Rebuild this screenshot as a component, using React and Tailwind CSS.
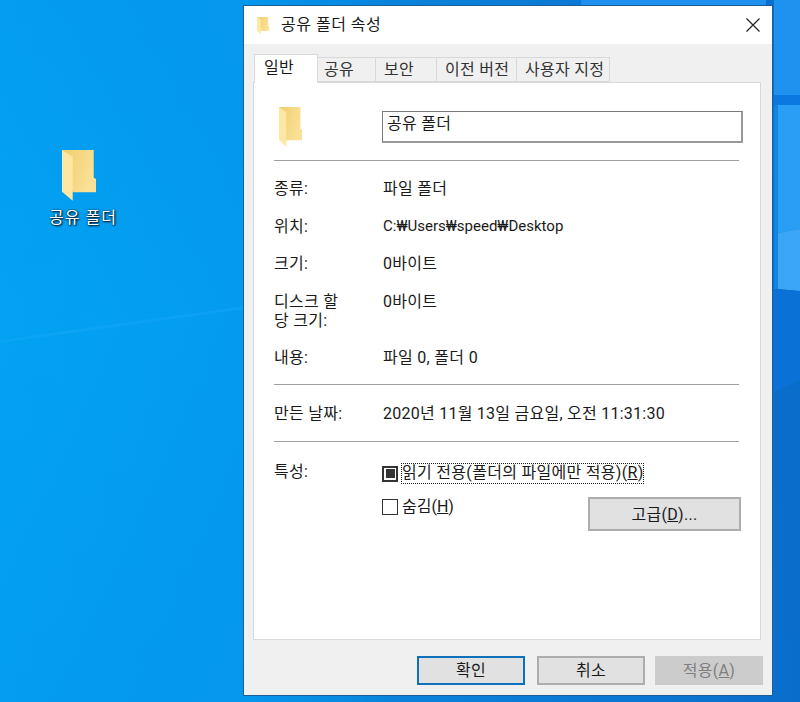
const font = "font-['Roboto','Noto_Sans_CJK_KR',sans-serif]";

const rows = [
  { label: "종류:", value: "파일 폴더" },
  { label: "위치:", value: "C:₩Users₩speed₩Desktop", latin: true },
  { label: "크기:", value: "0바이트" },
  { label: "디스크 할\n당 크기:", value: "0바이트" },
  { label: "내용:", value: "파일 0, 폴더 0" },
];

const tabs = [
  { name: "공유", width: "w-[58px] pl-[6px]" },
  { name: "보안", width: "w-[61px] pl-[8px]" },
  { name: "이전 버전", width: "w-[80px] pl-[8px]" },
  { name: "사용자 지정", width: "w-[93px] pl-[8px]" },
];

function FolderIcon({ className }) {
  return (
    <svg viewBox="0 0 34 51" preserveAspectRatio="none" className={className}>
      <defs>
        <linearGradient id="folderBack" x1="0" y1="0" x2="1" y2="0.4">
          <stop offset="0" stopColor="#f0cd6c" />
          <stop offset="1" stopColor="#fbe197" />
        </linearGradient>
      </defs>
      <polygon points="0,0 31.7,0 31.7,27.7 34,29 34,42.3 10.7,42.3" fill="url(#folderBack)" />
      <polygon points="0,0 10.7,6.7 10.7,50.7 0,41.7" fill="#fde7a3" />
    </svg>
  );
}

function Wallpaper() {
  return (
    <svg className="absolute inset-0 w-full h-full" viewBox="0 0 800 702" preserveAspectRatio="none">
      <defs>
        <linearGradient id="wallBase" x1="0" y1="0" x2="1" y2="0">
          <stop offset="0" stopColor="#03a2f2" />
          <stop offset="0.31" stopColor="#049bef" />
          <stop offset="0.5" stopColor="#0a84dc" />
          <stop offset="1" stopColor="#0a6ccb" />
        </linearGradient>
        <linearGradient id="wallTop" x1="0" y1="0" x2="0" y2="1">
          <stop offset="0" stopColor="#0a78d8" stopOpacity="0.12" />
          <stop offset="0.45" stopColor="#0a78d8" stopOpacity="0" />
          <stop offset="1" stopColor="#0a78d8" stopOpacity="0.12" />
        </linearGradient>
      </defs>
      <rect width="800" height="702" fill="url(#wallBase)" />
      <rect width="800" height="702" fill="url(#wallTop)" />
      <polygon points="0,340 245,306 245,309 0,343" fill="#22b0fa" opacity="0.25" />
      <rect x="581" y="0" width="185" height="6" fill="#1e90ee" />
      <rect x="774" y="0" width="26" height="95" fill="#1f92f0" />
      <rect x="774" y="95" width="26" height="10" fill="#0a78e0" />
      <rect x="774" y="105" width="26" height="184" fill="#0f86e6" />
      <polygon points="778,105 800,105 800,229 778,233" fill="#2a9ef5" />
      <polygon points="778,233 800,229 800,291 778,289" fill="#3aa6f5" />
      <polygon points="774,289 800,291 800,380 774,392" fill="#0a72d6" />
    </svg>
  );
}

function Btn({ children, className }) {
  return (
    <div className={`w-[108px] h-[29px] flex items-center justify-center bg-[#e1e1e1] border-2 ${className}`}>
      {children}
    </div>
  );
}

export default function App() {
  return (
    <div className={`relative w-[800px] h-[702px] overflow-hidden text-[16px] leading-[19px] tracking-[0.3px] text-[#1a1a1a] ${font}`}>
      <Wallpaper />

      {/* desktop icon */}
      <div className="absolute left-[39px] top-[150px] w-[80px] flex flex-col items-center">
        <FolderIcon className="w-[34px] h-[51px]" />
        <span className="mt-[7px] ml-[8px] whitespace-nowrap tracking-[1px] text-white [text-shadow:1px_1px_2px_#000,0_0_2px_#024]">공유 폴더</span>
      </div>

      {/* properties window */}
      <div className="absolute left-[243px] top-[5px] w-[530px] h-[691px] border border-[#1c5d93] bg-[#f0f0f0] flex flex-col">
        <div className="h-[38px] bg-white flex items-center shrink-0">
          <FolderIcon className="ml-[13px] w-[12px] h-[17px]" />
          <span className="ml-[12px] -mt-[2px] tracking-[0.5px]">공유 폴더 속성</span>
          <svg viewBox="0 0 14 14" className="ml-auto mr-[12px] -mt-[1px] w-[14px] h-[14px]">
            <path d="M0.5 0.5L13.5 13.5M13.5 0.5L0.5 13.5" stroke="#222" strokeWidth="1.2" fill="none" />
          </svg>
        </div>

        {/* tabs */}
        <div className="mt-[10px] pl-[10px] h-[29px] flex items-end shrink-0">
          <div className="relative z-10 w-[64px] h-[29px] pb-[3px] pl-[9px] bg-white border border-b-0 border-[#d9d9d9] flex items-center">
            일반
          </div>
          {tabs.map((tab) => (
            <div
              key={tab.name}
              className={`${tab.width} h-[25px] mb-px border border-l-0 border-[#d9d9d9] flex items-center whitespace-nowrap text-[#333]`}
            >
              {tab.name}
            </div>
          ))}
        </div>

        {/* general page */}
        <div className="ml-[9px] -mt-px w-[508px] h-[558px] bg-white border border-[#d9d9d9] pl-[20px] shrink-0">
          <div className="flex items-start h-[77px]">
            <FolderIcon className="ml-[5px] mt-[24px] w-[23px] h-[40px]" />
            <div className="ml-[80px] mt-[28px] w-[361px] h-[32px] border border-[#7a7a7a] border-b-2 border-r-2 border-b-[#999] border-r-[#999] pl-[4px] leading-[24px]">
              공유 폴더
            </div>
          </div>
          <div className="w-[465px] h-px bg-[#a0a0a0]" />

          <div className="pt-[18px] flex flex-col gap-[18.5px]">
            {rows.map((row) => (
              <div key={row.label} className="flex">
                <div className="w-[109px] whitespace-pre-line">{row.label}</div>
                <div className={row.latin ? "text-[15px] tracking-normal" : ""}>{row.value}</div>
              </div>
            ))}
          </div>
          <div className="mt-[17px] w-[465px] h-px bg-[#a0a0a0]" />

          <div className="flex pt-[19px]">
            <div className="w-[109px]">만든 날짜:</div>
            <div className="tracking-[0.25px]">2020년 11월 13일 금요일, 오전 11:31:30</div>
          </div>
          <div className="mt-[18px] w-[465px] h-px bg-[#a0a0a0]" />

          <div className="flex pt-[20px]">
            <div className="w-[108px]">특성:</div>
            <div className="w-[360px]">
              <div className="flex items-center h-[21px] mt-[1px]">
                <div className="w-[16px] h-[16px] border-2 border-[#333] flex items-center justify-center">
                  <div className="w-[9px] h-[9px] bg-[#333]" />
                </div>
                <div className="ml-[3px] h-[21px] w-[243px] border border-dotted border-[#222] whitespace-nowrap leading-[18px]">
                  읽기 전용(폴더의 파일에만 적용)(<span className="underline">R</span>)
                </div>
              </div>
              <div className="flex items-start">
                <div className="flex items-center mt-[13px]">
                  <div className="w-[16px] h-[16px] border border-[#333]" />
                  <span className="ml-[4px] tracking-normal">숨김(<span className="underline">H</span>)</span>
                </div>
                <div className="ml-auto mr-[1px] mt-[13px] w-[153px] h-[34px] flex items-center justify-center bg-[#e1e1e1] border-2 border-[#adadad]">
                  고급(<span className="underline">D</span>)...
                </div>
              </div>
            </div>
          </div>
        </div>

        {/* dialog buttons */}
        <div className="mt-[16px] pr-[9px] flex justify-end gap-[12px] shrink-0">
          <Btn className="border-[#0f70bb]">확인</Btn>
          <Btn className="border-[#adadad]">취소</Btn>
          <Btn className="-ml-[2px] !bg-[#cccccc] border-[#cccccc] text-[#7f7f7f]">
            적용(<span className="underline">A</span>)
          </Btn>
        </div>
      </div>
    </div>
  );
}
